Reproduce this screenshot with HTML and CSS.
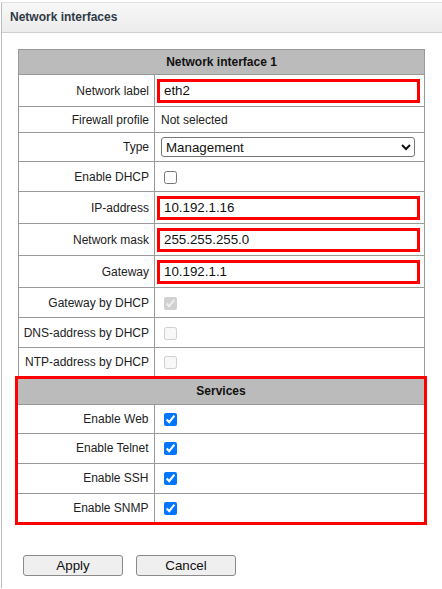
FILE: index.html
```html
<!DOCTYPE html>
<html>
<head>
<meta charset="utf-8">
<link rel="stylesheet" href="styles.css">
</head>
<body>
<div class="panel">
  <div class="panel-head">Network interfaces</div>
  <div class="panel-body">
    <table class="grid">
      <colgroup><col class="c1"><col class="c2"></colgroup>
      <tr class="r25"><th colspan="2">Network interface 1</th></tr>
      <tr class="r32"><td class="lbl">Network label</td><td class="inp"><input class="field" type="text" value="eth2"></td></tr>
      <tr class="r26"><td class="lbl">Firewall profile</td><td class="val">Not selected</td></tr>
      <tr class="r29"><td class="lbl">Type</td><td class="val"><select class="sel"><option>Management</option></select></td></tr>
      <tr class="r30"><td class="lbl">Enable DHCP</td><td class="val"><input class="cb" type="checkbox"></td></tr>
      <tr class="r32"><td class="lbl">IP-address</td><td class="inp"><input class="field" type="text" value="10.192.1.16"></td></tr>
      <tr class="r32"><td class="lbl">Network mask</td><td class="inp"><input class="field" type="text" value="255.255.255.0"></td></tr>
      <tr class="r32"><td class="lbl">Gateway</td><td class="inp"><input class="field" type="text" value="10.192.1.1"></td></tr>
      <tr class="r30"><td class="lbl">Gateway by DHCP</td><td class="val"><input class="cb" type="checkbox" checked disabled></td></tr>
      <tr class="r30"><td class="lbl">DNS-address by DHCP</td><td class="val"><input class="cb" type="checkbox" disabled></td></tr>
      <tr class="r29"><td class="lbl">NTP-address by DHCP</td><td class="val"><input class="cb" type="checkbox" disabled></td></tr>
    </table>
    <div class="services">
      <table class="grid inner">
        <colgroup><col class="c1"><col class="c2"></colgroup>
        <tr class="r25"><th colspan="2">Services</th></tr>
        <tr class="r29"><td class="lbl">Enable Web</td><td class="val"><input class="cb" type="checkbox" checked></td></tr>
        <tr class="r30"><td class="lbl">Enable Telnet</td><td class="val"><input class="cb" type="checkbox" checked></td></tr>
        <tr class="r30"><td class="lbl">Enable SSH</td><td class="val"><input class="cb" type="checkbox" checked></td></tr>
        <tr class="r29"><td class="lbl">Enable SNMP</td><td class="val"><input class="cb" type="checkbox" checked></td></tr>
      </table>
    </div>
    <div class="actions">
      <button class="btn" type="button">Apply</button>
      <button class="btn" type="button">Cancel</button>
    </div>
  </div>
</div>
</body>
</html>
```
FILE: styles.css
```css
html, body {
  margin: 0;
  padding: 0;
  background: #ffffff;
}
body {
  font-family: "Liberation Sans", Arial, sans-serif;
  font-size: 12px;
  color: #222;
}
.panel {
  margin-left: 1px;
  margin-top: 2px;
  border-left: 1px solid #bdbdbd;
  border-top: 1px solid #e2e2e2;
  min-height: 586px;
  box-sizing: border-box;
}
.panel-head {
  height: 30px;
  line-height: 29px;
  padding-left: 8px;
  font-weight: bold;
  font-size: 12px;
  color: #2f3a45;
  background: linear-gradient(#f7f7f7, #ececec);
  border-bottom: 1px solid #cfcfcf;
  box-sizing: border-box;
}
.panel-body {
  padding: 16px 0 0 16px;
}
.grid {
  border-collapse: collapse;
  width: 407px;
  table-layout: fixed;
}
.grid .c1 {
  width: 136px;
}
.grid th, .grid td {
  border: 1px solid #999;
  padding: 0;
}
.grid th {
  background: #bbbbbb;
  font-weight: bold;
  font-size: 12px;
  color: #111;
  text-align: center;
}
.grid .lbl {
  text-align: right;
  padding-right: 5px;
  color: #222;
}
.grid .val {
  padding-left: 6px;
  color: #222;
}
.grid .inp {
  padding-left: 2px;
}
.r25 { height: 25px; }
.r26 { height: 26px; }
.r29 { height: 29px; }
.r30 { height: 30px; }
.r32 { height: 32px; }
.field {
  display: block;
  box-sizing: border-box;
  width: 263px;
  height: 24px;
  border: 3px solid #ff0000;
  padding: 0 4px;
  margin: 0;
  font-family: "Liberation Sans", Arial, sans-serif;
  font-size: 13.33px;
  color: #111;
  background: #fff;
  outline: none;
}
.sel {
  width: 254px;
  height: 20px;
  margin: 0;
  font-family: "Liberation Sans", Arial, sans-serif;
  font-size: 13.33px;
  color: #111;
  border: 1px solid #767676;
  border-radius: 3px;
  background: #fff;
}
.cb {
  width: 13px;
  height: 13px;
  margin: 0 0 0 3px;
  vertical-align: middle;
}
.services {
  margin-left: -3px;
  margin-top: -1px;
  width: 412px;
  border: 3px solid #ff0000;
  box-sizing: border-box;
}
.grid.inner {
  width: 406px;
  border-style: hidden;
}
.actions {
  display: flex;
  gap: 13px;
  padding: 30px 0 0 5px;
}
.btn {
  width: 100px;
  height: 21px;
  padding: 0;
  font-family: "Liberation Sans", Arial, sans-serif;
  font-size: 13.33px;
  color: #111;
  background: #efefef;
  border: 1px solid #8a8a8a;
  border-radius: 3px;
}
```
